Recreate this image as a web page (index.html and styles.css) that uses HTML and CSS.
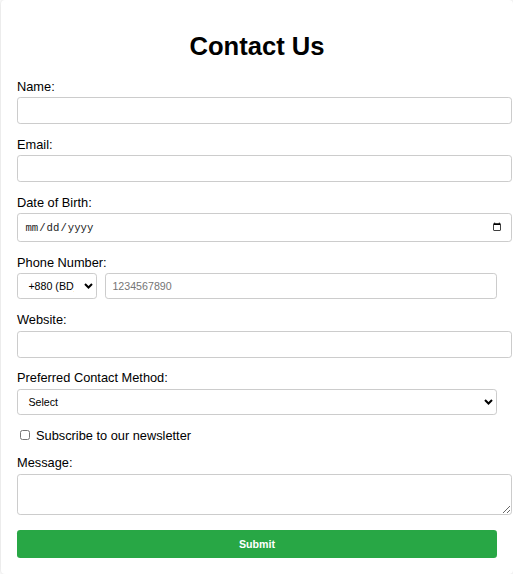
FILE: index.html
```html
<!DOCTYPE html>
<html lang="en">
<head>
<meta charset="utf-8">
<title>Contact Us</title>
<link rel="stylesheet" href="styles.css">
</head>
<body>
<div class="card">
  <h1 class="title">Contact Us</h1>
  <form class="form">
    <label class="label" for="name">Name:</label>
    <input class="field" type="text" id="name">

    <label class="label" for="email">Email:</label>
    <input class="field" type="email" id="email">

    <label class="label" for="dob">Date of Birth:</label>
    <input class="field field-date" type="date" id="dob">

    <label class="label" for="phone">Phone Number:</label>
    <div class="phone-row">
      <div class="select-wrap code-wrap">
        <select class="select code-select">
          <option>+880 (BD)</option>
        </select>
        <svg class="chev" width="9" height="6" viewBox="0 0 9 6" aria-hidden="true"><path d="M1 1 L4.5 4.5 L8 1" fill="none" stroke="#000" stroke-width="2"/></svg>
      </div>
      <input class="phone-input" type="tel" id="phone" placeholder="1234567890">
    </div>

    <label class="label" for="website">Website:</label>
    <input class="field" type="url" id="website">

    <label class="label" for="method">Preferred Contact Method:</label>
    <div class="select-wrap method-wrap">
      <select class="select method-select" id="method">
        <option>Select</option>
      </select>
      <svg class="chev" width="9" height="6" viewBox="0 0 9 6" aria-hidden="true"><path d="M1 1 L4.5 4.5 L8 1" fill="none" stroke="#000" stroke-width="2"/></svg>
    </div>

    <div class="check-row">
      <input class="check" type="checkbox" id="news"><label class="check-label" for="news">Subscribe to our newsletter</label>
    </div>

    <label class="label" for="msg">Message:</label>
    <textarea class="field area" id="msg"></textarea>

    <button class="submit" type="button">Submit</button>
  </form>
</div>
</body>
</html>
```

FILE: styles.css
```css
html, body {
  margin: 0;
  padding: 0;
  background: #fff;
}
body {
  font-family: "Liberation Sans", Arial, sans-serif;
  color: #000;
  overflow: hidden;
}
.card {
  box-sizing: border-box;
  width: 512px;
  margin: 0 0 0 1px;
  padding: 14.7px 16px 16px;
  background: #fff;
  border-radius: 4px;
  box-shadow: 0 0 4px rgba(0, 0, 0, 0.18);
}
.title {
  font-size: 25.6px;
  line-height: 29px;
  font-weight: bold;
  text-align: center;
  margin: 17px 0 18px;
}
.form {
  display: flex;
  flex-direction: column;
}
.label {
  display: block;
  font-size: 12.8px;
  line-height: 15px;
  margin-bottom: 3.5px;
}
.field {
  display: block;
  width: 480px;
  box-sizing: content-box;
  padding: 6.4px;
  border: 1px solid #ccc;
  border-radius: 3.2px;
  font-family: "Liberation Sans", Arial, sans-serif;
  font-size: 10.67px;
  margin: 0 0 12.8px;
  background: #fff;
  outline: none;
}
.field-date {
  box-sizing: border-box;
  width: 494.8px;
  height: 28.4px;
  font-family: "Liberation Mono", monospace;
  color: #222;
}
.phone-row {
  display: flex;
  gap: 8px;
  margin-bottom: 13.2px;
}
.select-wrap {
  position: relative;
}
.code-wrap {
  flex: 0 0 80px;
}
.method-wrap {
  width: 480px;
  margin-bottom: 13.2px;
}
.select {
  -webkit-appearance: none;
  appearance: none;
  display: block;
  width: 100%;
  box-sizing: border-box;
  height: 26px;
  padding: 0 22px 0 10.4px;
  border: 1px solid #ccc;
  border-radius: 3.2px;
  font-family: "Liberation Sans", Arial, sans-serif;
  font-size: 10.67px;
  color: #000;
  background: #fff;
  margin: 0;
}
.method-select {
  height: 26.4px;
}
.chev {
  position: absolute;
  right: 4.5px;
  top: 50%;
  margin-top: -3px;
  pointer-events: none;
}
.phone-input {
  flex: 1 1 0;
  min-width: 0;
  box-sizing: border-box;
  height: 26px;
  padding: 6.4px;
  border: 1px solid #ccc;
  border-radius: 3.2px;
  font-family: "Liberation Sans", Arial, sans-serif;
  font-size: 10.67px;
  background: #fff;
}
.phone-input::placeholder {
  color: #757575;
}
.check-row {
  font-size: 12.8px;
  line-height: 15px;
  margin-bottom: 11.6px;
}
.check {
  width: 10.4px;
  height: 10.4px;
  margin: 0 6px 2px 2.6px;
  vertical-align: baseline;
}
.check-label {
  font-size: 12.8px;
}
.area {
  height: 25.5px;
  resize: vertical;
  margin-top: 1px;
  margin-bottom: 15.7px;
}
.submit {
  width: 480px;
  height: 27.7px;
  border: none;
  border-radius: 3.2px;
  background: #28a745;
  color: #fff;
  font-family: "Liberation Sans", Arial, sans-serif;
  font-size: 10.67px;
  font-weight: bold;
  padding: 0;
}
```
